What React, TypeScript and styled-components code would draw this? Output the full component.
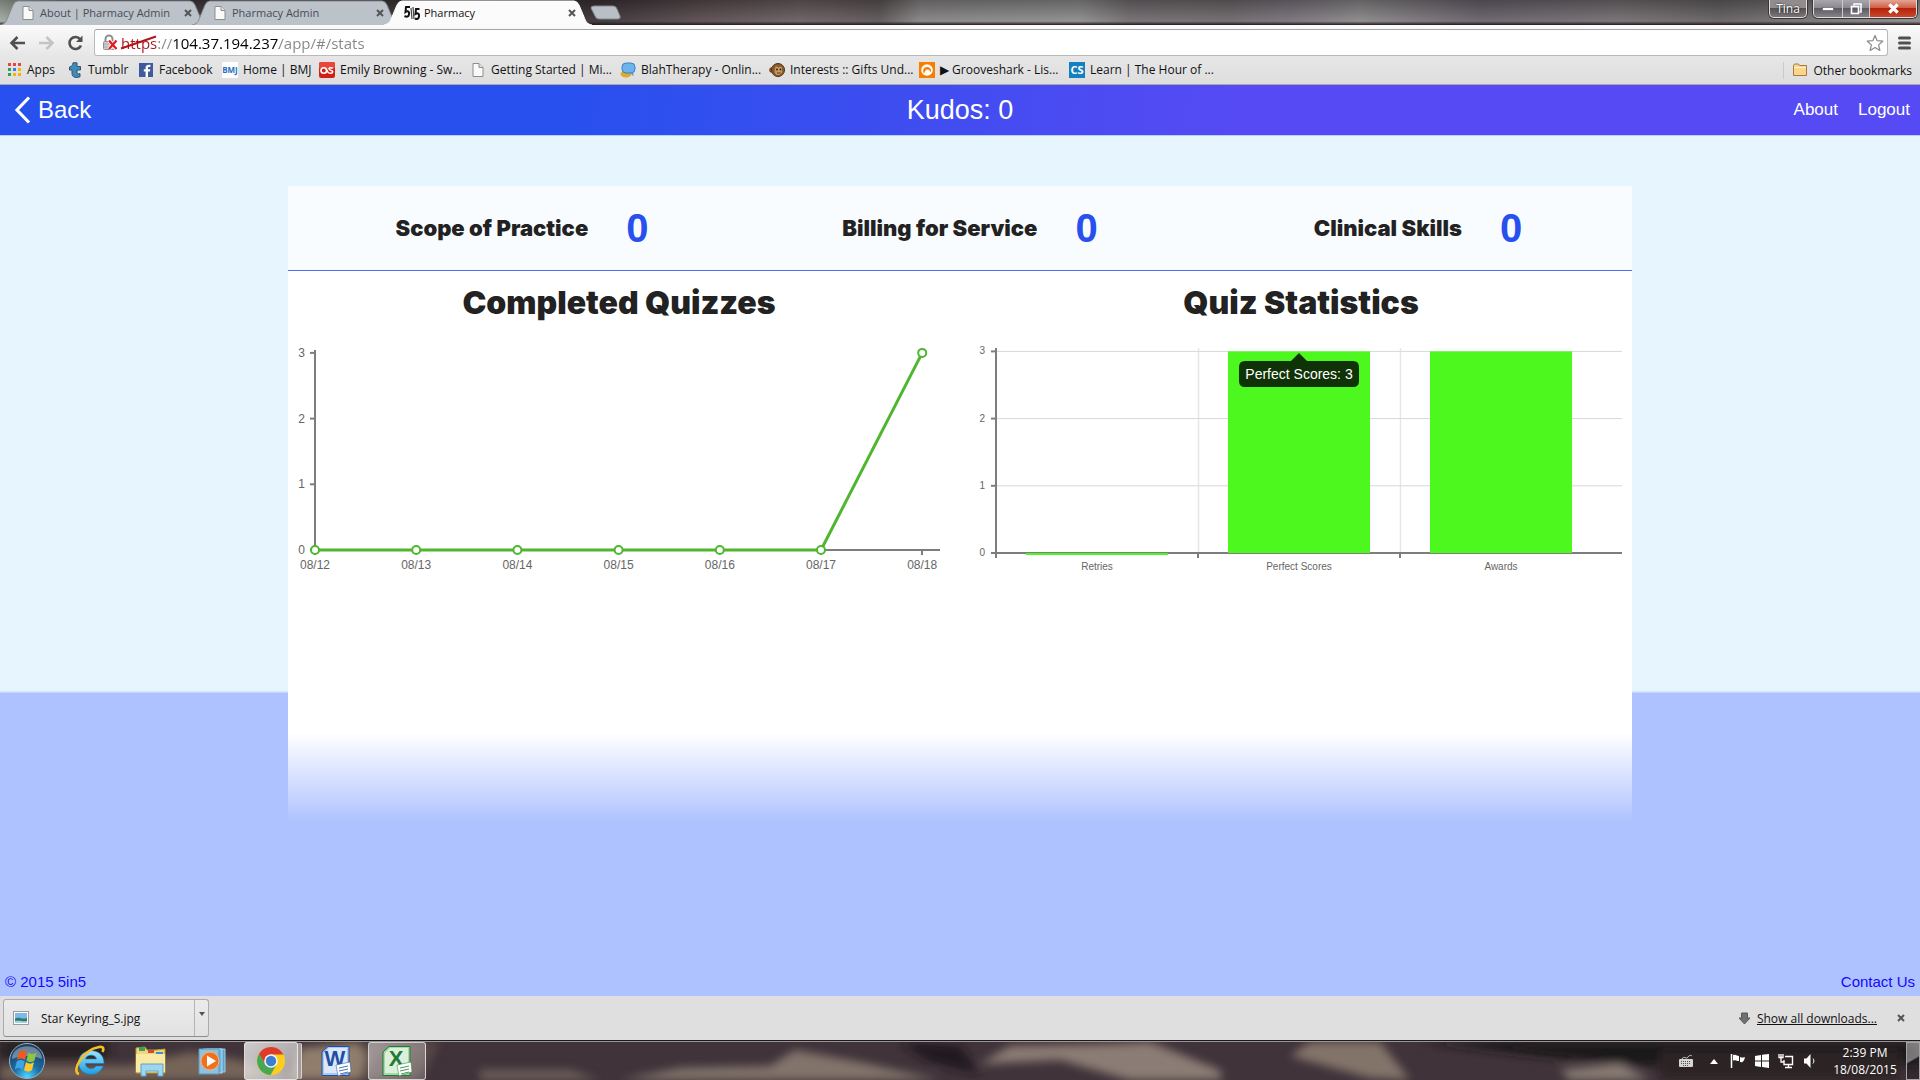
import React from "react";
import styled, { createGlobalStyle } from "styled-components";

const ui = `"Open Sans", "Noto Sans", sans-serif`;
const arial = `"Liberation Sans", Arial, sans-serif`;
const heavy = `Inter, "Liberation Sans", sans-serif`;

const Global = createGlobalStyle`
  *, *::before, *::after { box-sizing: border-box; }
  body { margin: 0; font-family: ${arial}; color: #222; }
  button { border: 0; padding: 0; background: none; font: inherit; color: inherit; cursor: pointer; }
  a { color: inherit; text-decoration: none; }
  h2, p { margin: 0; }
  svg { display: block; flex: none; }
`;

const Desktop = styled.div`
  min-height: 100vh;
  display: flex;
  flex-direction: column;
`;

/* ---------- window frame ---------- */

const TitleBar = styled.div`
  display: flex;
  height: 25px;
  padding-left: 8px;
  font: 12px ${ui};
  background:
    linear-gradient(180deg, rgba(0, 0, 0, 0.28), rgba(255, 255, 255, 0.06) 85%, rgba(40, 30, 35, 0.9) 98%),
    linear-gradient(90deg, #a3ada3 0, #8b9389 20px, #453b3d 60px, #3b3235 600px, #584b4e 700px, #6a5e60 800px,
      #5c5556 880px, #858383 920px, #8d8c8c 1080px, #716c6f 1130px, #6d686b 1230px, #77727a 1290px, #8a8789 1360px,
      #67616a 1480px, #736e71 1620px, #646062 1720px, #8c8b8c 100%);
`;

const Tabs = styled.nav`
  display: flex;
  flex: 1;
`;

const Tab = styled.div<{ $active?: boolean }>`
  position: relative;
  display: flex;
  align-items: center;
  gap: 4px;
  width: 192px;
  height: 25px;
  padding: 1px 8px 0 12px;
  color: ${(p) => (p.$active ? "#111" : "#484c52")};
  z-index: ${(p) => (p.$active ? 2 : 1)};
`;

const TabShape = styled.svg`
  position: absolute;
  left: -8px;
  top: 0;
  z-index: -1;
`;

const TabTitle = styled.button`
  flex: 1;
  min-width: 0;
  font-size: 11px;
  line-height: 16px;
  text-align: left;
  white-space: nowrap;
`;

const NewTab = styled.button`
  align-self: center;
  margin-left: 6px;
  z-index: 1;
`;

const UserBadge = styled.button`
  height: 18px;
  width: 38px;
  margin-right: 6px;
  border: 1px solid #ddd;
  border-top: 0;
  border-radius: 0 0 5px 5px;
  color: #fff;
  line-height: 16px;
  text-shadow: 0 0 2px #000;
  background: linear-gradient(#918d8e 45%, #565254 50%, #7b7778);
  box-shadow: 0 0 0 1px #3a3637;
`;

const WindowButtons = styled.div`
  display: flex;
  height: 18px;
  margin-right: 3px;
  border: 1px solid #ddd;
  border-top: 0;
  border-radius: 0 0 5px 5px;
  overflow: hidden;
  box-shadow: 0 0 0 1px #3a3637;
`;

const WindowButton = styled.button<{ $w: number; $close?: boolean }>`
  display: grid;
  place-items: center;
  width: ${(p) => p.$w}px;
  border-right: 1px solid #ccc;
  background: ${(p) =>
    p.$close
      ? "linear-gradient(#e3a595, #cf5f48 45%, #b52408 50%, #c8482c)"
      : "linear-gradient(#a9a7ac, #8b888f 45%, #5d5a62 50%, #85828a)"};
  &:last-child { border-right: 0; }
`;

/* ---------- toolbar ---------- */

const Chrome = styled.div`
  height: 60px;
  font: 12px ${ui};
  background: linear-gradient(#fbfbfb, #e6e6e6 32px, #dedede);
  border-bottom: 1px solid #a9a9a9;
`;

const AddressRow = styled.form`
  display: flex;
  align-items: center;
  height: 35px;
  padding: 0 9px;
`;

const NavButton = styled.button`
  width: 29px;
  height: 20px;
`;

const Omnibox = styled.label`
  position: relative;
  flex: 1;
  display: flex;
  align-items: center;
  gap: 3px;
  height: 27px;
  margin: 0 10px 0 -2px;
  padding: 0 3px 0 7px;
  background: #fff;
  border: 1px solid #b9b9b9;
  border-top-color: #a4a4a4;
  border-radius: 3px;
`;

const Address = styled.input`
  flex: 1;
  min-width: 0;
  height: 24px;
  padding: 0;
  border: 0;
  outline: 0;
  font: 15px ${ui};
  color: transparent;
  background: linear-gradient(90deg, #a8171d 37px, #858585 37px 51px, #000 51px 158px, #858585 158px);
  -webkit-background-clip: text;
  background-clip: text;
`;

const Strike = styled.svg`
  position: absolute;
  left: 25px;
  top: 5px;
`;

const Bookmarks = styled.nav`
  display: flex;
  align-items: center;
  height: 20px;
  padding: 0 8px 0 6px;
`;

const Bookmark = styled.a<{ $w: number }>`
  display: flex;
  align-items: center;
  gap: 5px;
  width: ${(p) => p.$w}px;
  line-height: 16px;
  white-space: nowrap;
  color: #111;
`;

const OtherBookmarks = styled.a`
  display: flex;
  align-items: center;
  gap: 5px;
  margin-left: auto;
  padding-left: 8px;
  border-left: 1px solid #c4ccd3;
  color: #111;
`;

/* ---------- web page ---------- */

const Page = styled.div`
  flex: 1;
  display: flex;
  flex-direction: column;
  background: linear-gradient(#e7f5ff 66.5%, #aec2ff 66.8%);
`;

const Header = styled.header`
  display: grid;
  grid-template-columns: 1fr auto 1fr;
  align-items: center;
  height: 50px;
  padding: 0 10px;
  color: #fff;
  background: linear-gradient(96deg, #2850ee 30%, #554af3 64%);
  box-shadow: 0 1px 0 #afd3ff;
`;

const Back = styled.a`
  display: flex;
  align-items: center;
  gap: 7px;
  padding-left: 4px;
  font-size: 24px;
`;

const Kudos = styled.div`
  font-size: 27px;
`;

const HeaderLinks = styled.nav`
  display: flex;
  justify-content: flex-end;
  gap: 20px;
  font-size: 17px;
`;

const Card = styled.main`
  width: 70%;
  margin: 51px auto 0;
`;

const Scores = styled.section`
  display: grid;
  grid-template-columns: repeat(3, 1fr);
  height: 85px;
  background: #f9fcff;
  border-bottom: 1px solid #4a70ee;
`;

const Score = styled.div`
  display: flex;
  align-items: center;
  justify-content: center;
  gap: 38px;
  padding-left: 20px;
  white-space: nowrap;
`;

const ScoreLabel = styled.span`
  font: 900 22px ${heavy};
`;

const ScoreValue = styled.span`
  font: bold 40px ${arial};
  color: #2850ee;
`;

const Charts = styled.section`
  display: grid;
  grid-template-columns: 1fr 1fr;
  gap: 20px;
  padding: 12px 0 153px;
  background: #fff;
`;

const ChartTitle = styled.h2`
  margin-bottom: 12px;
  font: 900 32px/40px ${heavy};
  text-align: center;
`;

const Plot = styled.svg`
  width: 100%;
  height: auto;
  font-family: ${arial};
  fill: #666;
`;

const Fade = styled.div`
  height: 89px;
  background: linear-gradient(#fff, #aec2ff);
`;

const Footer = styled.footer`
  display: flex;
  justify-content: space-between;
  margin-top: auto;
  padding: 0 5px 4px;
  font-size: 15px;
  line-height: 20px;
  color: #1607ff;
`;

/* ---------- downloads ---------- */

const Downloads = styled.div`
  display: flex;
  align-items: center;
  height: 44px;
  padding: 0 15px 0 3px;
  font: 12px ${ui};
  color: #111;
  background: #dfdfdf;
`;

const Download = styled.div`
  display: flex;
  width: 206px;
  height: 38px;
  border: 1px solid #acacac;
  border-bottom-color: #8d8d8d;
  border-radius: 3px;
  background: linear-gradient(#ebebeb, #e2e2e2);
`;

const FileButton = styled.button`
  flex: 1;
  display: flex;
  align-items: center;
  gap: 12px;
  padding-left: 9px;
  border-right: 1px solid #b4b4b4;
`;

const FileMenu = styled.button`
  display: grid;
  justify-content: center;
  width: 13px;
  padding-top: 12px;
`;

const ShowAll = styled.a`
  display: flex;
  align-items: center;
  gap: 6px;
  margin: 0 20px 0 auto;
  text-decoration: underline;
`;

/* ---------- taskbar ---------- */

const Taskbar = styled.footer`
  position: relative;
  display: flex;
  align-items: center;
  height: 40px;
  padding-left: 8px;
  overflow: hidden;
  border-top: 1px solid #1c1a1c;
  background: #40333a;
  box-shadow: inset 0 1px 0 #9b9696;
  isolation: isolate;
`;

const Wallpaper = styled.svg`
  position: absolute;
  inset: 1px 0 0;
  width: 100%;
  height: 38px;
  z-index: -1;
`;

const TaskButton = styled.button<{ $open?: boolean }>`
  display: grid;
  place-items: center;
  width: 58px;
  height: 38px;
  margin-right: 3px;
  border: 1px solid ${(p) => (p.$open ? "rgba(240,236,236,.75)" : "transparent")};
  border-radius: 3px;
  background: ${(p) => (p.$open ? "linear-gradient(135deg, rgba(255,255,255,.45), rgba(255,255,255,.18))" : "none")};
`;

const StackedButton = styled(TaskButton)`
  width: 54px;
  background: linear-gradient(135deg, rgba(255, 255, 255, 0.75), rgba(255, 255, 255, 0.5));
  box-shadow: 4px 0 0 -1px rgba(160, 150, 150, 0.9), 5px 0 0 -1px #d8d4d4;
  margin-right: 9px;
`;

const StartButton = styled.button`
  width: 38px;
  margin-right: 15px;
`;

const Tray = styled.div`
  display: flex;
  align-items: center;
  gap: 8px;
  margin-left: auto;
  height: 38px;
`;

const Clock = styled.time`
  width: 66px;
  margin-left: 6px;
  font: 12px/17px ${ui};
  color: #fff;
  text-align: center;
  white-space: nowrap;
`;

const ShowDesktop = styled.button`
  width: 14px;
  height: 38px;
  border: 1px solid #a8a4a6;
  background: linear-gradient(150deg, rgba(255, 255, 255, 0.4) 45%, rgba(0, 0, 0, 0.2) 50%);
`;

/* ---------- icons ---------- */

const DocIcon = () => (
  <svg width="16" height="16" viewBox="0 0 16 16">
    <path d="M3 1.5h6l4 4v9H3z" fill="#fafafa" stroke="#8d8d8d" />
    <path d="M9 1.5v4h4" fill="#e2e2e2" stroke="#8d8d8d" />
  </svg>
);

const FiveIcon = () => (
  <svg width="16" height="16" viewBox="0 0 16 16" fill="none" stroke="#111" strokeWidth="2">
    <path d="M6 2H2L1.500 7C4 5 5.500 7 5 9.500 4.500 12 2.500 12 .5 11" />
    <path d="M7 3l1 11M9 2l1 12" stroke="#444" strokeWidth="1.200" />
    <path d="M15.500 4h-3.500l-.5 5c2.500-1.500 4 0 3.500 2.500-.5 2.500-2 3-4 2" />
  </svg>
);

const Cross = ({ size = 8, color = "#555", w = 2 }: { size?: number; color?: string; w?: number }) => (
  <svg width={size} height={size} viewBox="0 0 8 8">
    <path d="M1 1l6 6M7 1L1 7" stroke={color} strokeWidth={w} />
  </svg>
);

const ArrowIcon = ({ color, flip }: { color: string; flip?: boolean }) => (
  <svg width="17" height="20" viewBox="0 0 17 20">
    <path d={flip ? "M1 10h13M8.500 4l6 6-6 6" : "M16 10H3M8.500 4l-6 6 6 6"} fill="none" stroke={color} strokeWidth="2.600" />
  </svg>
);

const ReloadIcon = () => (
  <svg width="17" height="20" viewBox="0 0 17 20">
    <path d="M13.200 6.200A6 6 0 1 0 14 12.500" fill="none" stroke="#505050" strokeWidth="2.600" />
    <path d="M15.500 2.500V9H9z" fill="#505050" />
  </svg>
);

const LockIcon = () => (
  <svg width="16" height="18" viewBox="0 0 16 18">
    <path d="M3.500 8V5a3.500 3.500 0 0 1 7 0v3" fill="none" stroke="#8f8f8f" strokeWidth="2" />
    <rect x="1.500" y="7.500" width="11" height="8" rx="1" fill="#cdcdcd" stroke="#909090" />
    <path d="M2 10h9M2 13h9" stroke="#aaa" />
    <path d="M7 6.500l7.500 8.500M14.500 6.500L7 15" stroke="#fff" strokeWidth="4" />
    <path d="M7 6.500l7.500 8.500M14.500 6.500L7 15" stroke="#e3191b" strokeWidth="2.200" />
  </svg>
);

const StarIcon = () => (
  <svg width="18" height="18" viewBox="0 0 18 18">
    <path d="M9 1.500l2.200 5.200 5.600.5-4.200 3.700 1.300 5.600L9 13.500l-4.900 3 1.300-5.600L1.200 7.200l5.600-.5z" fill="#fff" stroke="#8b8b8b" strokeWidth="1.200" strokeLinejoin="round" />
  </svg>
);

const MenuIcon = () => (
  <svg width="13" height="14" viewBox="0 0 13 14">
    <path d="M1.500 2h10M1.500 7h10M1.500 12h10" stroke="#505050" strokeWidth="3" strokeLinecap="round" />
  </svg>
);

const AppsIcon = () => (
  <svg width="16" height="16" viewBox="0 0 16 16">
    {["#e8453c", "#e8453c", "#e8453c", "#2fa14f", "#3b7ded", "#f4b400", "#2fa14f", "#f4b400", "#f4b400"].map((c, i) => (
      <rect key={i} x={2 + (i % 3) * 5} y={1 + Math.floor(i / 3) * 5} width="3" height="3" fill={c} />
    ))}
  </svg>
);

const TumblrIcon = () => (
  <svg width="16" height="16" viewBox="0 0 16 16">
    <path d="M6 .8h4v3.700h3.500V8H10v3c0 1 1.500 1.200 3 .6v3.200c-4 1.500-8 .6-8-3.300V8H2.500V5C5 4.500 5.800 3 6 .8z" fill="#3e8cba" stroke="#34526b" />
  </svg>
);

const FacebookIcon = () => (
  <svg width="16" height="16" viewBox="0 0 16 16">
    <rect x="1" y="1" width="14" height="14" fill="#3f5b9b" />
    <path d="M10 15V9.500h2l.3-2.300H10V6c0-.8.3-1.100 1.200-1.100h1.200V2.800C9.200 2.400 7.600 3.300 7.600 5.600v1.600H5.800v2.300h1.800V15z" fill="#fff" />
  </svg>
);

const LetterIcon = ({ text, bg, color = "#fff", size, y = 11 }: { text: string; bg: string; color?: string; size: number; y?: number }) => (
  <svg width="16" height="16" viewBox="0 0 16 16">
    <rect width="16" height="16" fill={bg} />
    <text x="8" y={y} fontSize={size} fontFamily="Open Sans" fontWeight="bold" fill={color} textAnchor="middle">{text}</text>
  </svg>
);

const LastIcon = () => (
  <svg width="16" height="16" viewBox="0 0 16 16">
    <rect width="16" height="16" rx="2" fill="#cf1f16" />
    <rect width="16" height="7" rx="2" fill="#e6493a" />
    <circle cx="4.800" cy="8.500" r="2.800" fill="none" stroke="#fff" strokeWidth="1.600" />
    <path d="M14 6.200c-2-1-4.200-.6-4 .8s3.800 1 3.800 2.800-3 2-4.800.4L7 7" fill="none" stroke="#fff" strokeWidth="1.500" />
  </svg>
);

const ChatIcon = () => (
  <svg width="16" height="16" viewBox="0 0 16 16">
    <ellipse cx="6" cy="12" rx="5.500" ry="3.500" fill="#e0a92c" />
    <rect x="2" y="1" width="13" height="10" rx="4" fill="#6eb4ec" stroke="#3d82c4" />
    <path d="M10 10l3.500 4.500-.5-5z" fill="#4d91cf" />
  </svg>
);

const MonkeyIcon = () => (
  <svg width="16" height="16" viewBox="0 0 16 16">
    <circle cx="3" cy="8" r="2.800" fill="#7d4f26" />
    <circle cx="9" cy="8" r="6.500" fill="#8a5a2c" stroke="#4f3014" />
    <path d="M6 7c0-3 3-3 3.500-1C10 4 14 4 13 8c1 3-2 5-4 5s-4-2-3-6z" fill="#c69a66" />
    <circle cx="8" cy="7.500" r=".9" fill="#2b190a" />
    <circle cx="11.500" cy="7.500" r=".9" fill="#2b190a" />
    <path d="M8 11h3.500" stroke="#5a3515" />
  </svg>
);

const GroovesharkIcon = () => (
  <svg width="16" height="16" viewBox="0 0 16 16">
    <rect width="16" height="16" fill="#f77f00" />
    <circle cx="8" cy="8" r="5.800" fill="#fff" />
    <path d="M5 11.500C3 8 5 5 8 5s4.500 2.500 4 5c-1-.5-1.500-2.500-3.500-2.500S6 9.500 5 11.500z" fill="#f77f00" />
  </svg>
);

const FolderIcon = () => (
  <svg width="16" height="16" viewBox="0 0 16 16">
    <path d="M1.500 13.500v-10l1-1.500h4l1 1.500h7v10z" fill="#fbd58c" stroke="#a77a3e" />
    <path d="M2 5.500h12" stroke="#fff1cf" />
  </svg>
);

const ImageFileIcon = () => (
  <svg width="16" height="14" viewBox="0 0 16 14">
    <rect x=".5" y=".5" width="15" height="13" fill="#fff" stroke="#9b9b9b" />
    <rect x="2" y="2" width="12" height="10" fill="#7fb9e6" />
    <path d="M2 8c4-3 7 1 12-1v5H2z" fill="#2d7a6b" />
    <path d="M2 10c5-1 8 1 12 0v2H2z" fill="#9fd6e5" />
  </svg>
);

const StartOrb = () => (
  <svg width="38" height="38" viewBox="0 0 38 38">
    <defs>
      <radialGradient id="orb" cx="50%" cy="95%" r="85%">
        <stop offset="0" stopColor="#4fd6ff" />
        <stop offset=".45" stopColor="#1b6ea6" />
        <stop offset="1" stopColor="#1d3d5c" />
      </radialGradient>
    </defs>
    <circle cx="19" cy="19" r="17.500" fill="url(#orb)" stroke="#8fb4cc" />
    <path d="M4 17C4 0 34 0 34 17 25 13 13 13 4 17z" fill="#fff" opacity=".35" />
    <path d="M11 10c3-2 5-2 8 0l-2 8c-3-2-5-2-8 0z" fill="#ee5a24" />
    <path d="M20.500 10.500c3 2 5 2 8 0l-2 8c-3 2-5 2-8 0z" fill="#8fc640" />
    <path d="M8.700 19.500c3-2 5-2 8 0l-2 8c-3-2-5-2-8 0z" fill="#3fa4e6" />
    <path d="M18 20c3 2 5 2 8 0l-2 8c-3 2-5 2-8 0z" fill="#fdc92c" />
  </svg>
);

const ExplorerE = () => (
  <svg width="32" height="32" viewBox="0 0 32 32">
    <defs>
      <linearGradient id="ie" x2="0" y2="1">
        <stop offset="0" stopColor="#9be4fb" />
        <stop offset="1" stopColor="#1f9be0" />
      </linearGradient>
    </defs>
    <path d="M30 18.500H11.500c.3 6 8.500 6.500 10.500 2.500h7.300C24 34.500 4.500 31 4.500 17.500 4.500 2 30.500 1 30 18.500zM11.500 14h11c-.7-5-10-5-11 0z" fill="url(#ie)" stroke="#1578b8" strokeWidth=".6" />
    <path d="M5 29C-3 27 8 5 25 2c5-.8 5 2 3.500 5" fill="none" stroke="#f5bf26" strokeWidth="2.600" />
  </svg>
);

const LibraryIcon = () => (
  <svg width="34" height="32" viewBox="0 0 34 32">
    <path d="M2 3l9-1 2 3h9l9-1v24H2z" fill="#f0d77d" stroke="#b9983c" />
    <path d="M5 2h6v4H5z" fill="#3f9e54" />
    <path d="M14 5h6v3h-6z" fill="#d34c32" />
    <path d="M22 7h7v2h-7z" fill="#3d8fd1" />
    <path d="M2 9h29v18H2z" fill="#f8e9a4" />
    <path d="M7 31V19h22v12h-5v-5H12v5z" fill="#9ed5ef" stroke="#5aa3cb" />
  </svg>
);

const MediaIcon = () => (
  <svg width="28" height="28" viewBox="0 0 28 28">
    <path d="M8 2h19v23H8z" fill="#5ba1cf" stroke="#9ccbe8" />
    <path d="M5 2h19v24H5z" fill="#73b4da" stroke="#b5d9ee" />
    <path d="M1 2h20v25H1z" fill="#8cc3e2" stroke="#6197b9" />
    <circle cx="12" cy="14" r="9" fill="#f0701c" stroke="#fbb183" />
    <path d="M9 8.500v11l9-5.500z" fill="#fff" />
  </svg>
);

const ChromeIcon = () => (
  <svg width="30" height="30" viewBox="0 0 30 30">
    <circle cx="15" cy="15" r="14" fill="#fccd1d" />
    <path d="M15 8.500h12.500A14 14 0 0 0 2.900 8L9 18z" fill="#de3b2d" />
    <path d="M2.900 8A14 14 0 0 0 14.500 29L20.500 18.500 15 15 9.500 18.500z" fill="#47a851" />
    <circle cx="15" cy="15" r="6.800" fill="#f3f3f3" />
    <circle cx="15" cy="15" r="5.200" fill="#3a7fd0" />
  </svg>
);

const OfficeIcon = ({ letter, color, tint }: { letter: string; color: string; tint: string }) => (
  <svg width="32" height="32" viewBox="0 0 32 32">
    <path d="M8 1.500h21v29H2V7z" fill={tint} stroke={color} />
    <path d="M4 8l5-5h18v25H4z" fill="#fff" opacity=".6" />
    <text x="15" y="21" fontFamily="Liberation Sans" fontWeight="bold" fontSize="22" fill={color} textAnchor="middle">{letter}</text>
    <path d="M16 20l14-3 1 10-13 4z" fill="#fff" stroke={color} strokeWidth=".5" />
    <path d="M19 23l9-2M19 26l9-2M20 29l8-2" stroke={color} strokeWidth=".8" />
  </svg>
);

const KeyboardIcon = () => (
  <svg width="20" height="16" viewBox="0 0 20 16">
    <path d="M4 6c2-4 4 1 6-2s4-1 4-1" fill="none" stroke="#cfcfcf" />
    <rect x="1" y="6" width="14" height="8" rx="1" fill="#d5d5d5" />
    <path d="M3 8.500h10M3 10.500h10M5 12.500h6" stroke="#555" strokeDasharray="1 1" />
  </svg>
);

const FlagIcon = () => (
  <svg width="16" height="16" viewBox="0 0 16 16">
    <path d="M1.500 1v14" stroke="#fff" strokeWidth="1.500" />
    <path d="M3 2c3-1 4 1 6 1v5C7 8 6 6.500 3 7.500zM10 4c2 1 3 .5 5 0-.5 2-1 4-2.500 5-1 .5-1.500 0-2.500 0z" fill="#fff" />
  </svg>
);

const WindowsIcon = () => (
  <svg width="16" height="16" viewBox="0 0 16 16">
    <path d="M1 3l6-1v5.500H1zM8 1.800L15 1v6.500H8zM1 8.500h6V14l-6-1zM8 8.500h7V15l-7-.9z" fill="#fff" />
  </svg>
);

const NetworkIcon = () => (
  <svg width="16" height="16" viewBox="0 0 16 16" fill="none" stroke="#fff">
    <path d="M7 3.500h7.500v8H6V7" strokeWidth="1.400" />
    <path d="M1 1v3.500h4V1M3 4.500V9h3M3 1v3M7 14.500h7M10.500 12v2" strokeWidth="1.300" />
  </svg>
);

const SpeakerIcon = () => (
  <svg width="16" height="16" viewBox="0 0 16 16">
    <path d="M2 5.500h2.500L8.500 1v14l-4-4.500H2z" fill="#fff" />
    <path d="M11 5.500c1.200 1.500 1.200 3.500 0 5" fill="none" stroke="#fff" />
  </svg>
);

/* ---------- data ---------- */

const bookmarks: { label: string; icon: React.ReactNode; w: number }[] = [
  { label: "Apps", icon: <AppsIcon />, w: 61 },
  { label: "Tumblr", icon: <TumblrIcon />, w: 71 },
  { label: "Facebook", icon: <FacebookIcon />, w: 84 },
  { label: "Home | BMJ", icon: <LetterIcon text="BMJ" bg="#fff" color="#2a6ebb" size={8} />, w: 97 },
  { label: "Emily Browning - Sw...", icon: <LastIcon />, w: 151 },
  { label: "Getting Started | Mi...", icon: <DocIcon />, w: 150 },
  { label: "BlahTherapy - Onlin...", icon: <ChatIcon />, w: 149 },
  { label: "Interests :: Gifts Und...", icon: <MonkeyIcon />, w: 150 },
  { label: "▶ Grooveshark - Lis...", icon: <GroovesharkIcon />, w: 150 },
  { label: "Learn | The Hour of ...", icon: <LetterIcon text="CS" bg="#1580c0" size={11} y={12} />, w: 150 },
];

const scores = ["Scope of Practice", "Billing for Service", "Clinical Skills"];
const days = ["08/12", "08/13", "08/14", "08/15", "08/16", "08/17", "08/18"];
const completed = [0, 0, 0, 0, 0, 0, 3];
const stats = [
  { label: "Retries", value: 0 },
  { label: "Perfect Scores", value: 3 },
  { label: "Awards", value: 3 },
];

const BrowserTab = ({ title, icon, active }: { title: string; icon: React.ReactNode; active?: boolean }) => (
  <Tab $active={active}>
    <TabShape width="212" height="25" viewBox="0 0 212 25">
      <path
        d="M0 25C5 24 6 22 8 17L13 5Q15 1 18 1H190Q193 1 195 5L200 17C202 22 203 24 208 25"
        fill={active ? "#fbfbfb" : "#bcc2ca"}
        stroke={active ? "#fff" : "#868a90"}
      />
    </TabShape>
    {icon}
    <TabTitle type="button">{title}</TabTitle>
    <button type="button" aria-label="Close tab"><Cross /></button>
  </Tab>
);

const LineChart = () => {
  const x = (i: number) => 27 + i * 101.2;
  const y = (v: number) => 215 - v * 65.7;
  return (
    <Plot viewBox="0 0 662 245" fontSize="12" role="img" aria-label="Completed Quizzes">
      <path d="M27 15V220M22 215H652M634 215v5" stroke="#7d7d7d" strokeWidth="2" fill="none" />
      {[0, 1, 2, 3].map((v) => (
        <g key={v}>
          <path d={`M22 ${y(v)}h5`} stroke="#7d7d7d" strokeWidth="2" />
          <text x="17" y={y(v) + 4} textAnchor="end">{v}</text>
        </g>
      ))}
      <polyline points={completed.map((v, i) => `${x(i)},${y(v)}`).join(" ")} fill="none" stroke="#4fb62f" strokeWidth="3" strokeLinejoin="round" />
      {completed.map((v, i) => (
        <g key={i}>
          <circle cx={x(i)} cy={y(v)} r="4" fill="#fff" stroke="#4fb62f" strokeWidth="2" />
          <text x={x(i)} y="234" textAnchor="middle">{days[i]}</text>
        </g>
      ))}
    </Plot>
  );
};

const BarChart = () => {
  const y = (v: number) => 218 - v * 67.2;
  return (
    <Plot viewBox="0 0 662 245" fontSize="10" role="img" aria-label="Quiz Statistics">
      <path d="M228.500 13V218M430.500 13V218" stroke="#e6e6e6" strokeWidth="1.500" />
      {[0, 1, 2, 3].map((v) => (
        <g key={v}>
          <path d={`M26 ${y(v)}H652`} stroke="#d8d8d8" strokeWidth="1" />
          <path d={`M21 ${y(v)}h5`} stroke="#7d7d7d" strokeWidth="2" />
          <text x="15" y={y(v) + 3} textAnchor="end">{v}</text>
        </g>
      ))}
      <path d="M26 13V223M26 218H652M228 218v5M430 218v5" stroke="#7d7d7d" strokeWidth="2" />
      {stats.map((s, i) => (
        <g key={s.label}>
          <rect x={56 + i * 202} y={s.value ? y(s.value) : 218} width="142" height={s.value ? 218 - y(s.value) : 2} fill="#4cf81e" />
          <text x={127 + i * 202} y="235" textAnchor="middle">{s.label}</text>
        </g>
      ))}
      <path d="M329 18l8 8h46q6 0 6 6v14q0 6-6 6H275q-6 0-6-6V32q0-6 6-6h46z" fill="#000" fillOpacity=".8" />
      <text x="329" y="44" fontSize="14" fill="#fff" textAnchor="middle">Perfect Scores: 3</text>
    </Plot>
  );
};

export default function App() {
  return (
    <Desktop>
      <Global />
      <TitleBar>
        <Tabs>
          <BrowserTab title="About | Pharmacy Admin" icon={<DocIcon />} />
          <BrowserTab title="Pharmacy Admin" icon={<DocIcon />} />
          <BrowserTab title="Pharmacy" icon={<FiveIcon />} active />
          <NewTab aria-label="New tab">
            <svg width="32" height="15" viewBox="0 0 32 15">
              <path d="M1 3Q1 1 4 1H23Q26 1 27 4L30 11Q31 14 28 14H9Q6 14 5 11Z" fill="#b9bfc6" stroke="#83868b" />
            </svg>
          </NewTab>
        </Tabs>
        <UserBadge>Tina</UserBadge>
        <WindowButtons>
          <WindowButton $w={29} aria-label="Minimize">
            <svg width="12" height="6"><rect x=".5" y="1.500" width="11" height="3" fill="#fff" stroke="#555" strokeWidth=".6" /></svg>
          </WindowButton>
          <WindowButton $w={27} aria-label="Restore">
            <svg width="12" height="12" viewBox="0 0 12 12" fill="none" stroke="#fff" strokeWidth="1.600">
              <path d="M4 2.500V1h7v8H9.500" />
              <rect x="1.500" y="3.500" width="7" height="7" />
            </svg>
          </WindowButton>
          <WindowButton $w={46} $close aria-label="Close"><Cross size={11} color="#fff" w={2.4} /></WindowButton>
        </WindowButtons>
      </TitleBar>

      <Chrome>
        <AddressRow onSubmit={(e) => e.preventDefault()}>
          <NavButton type="button" aria-label="Back"><ArrowIcon color="#505050" /></NavButton>
          <NavButton type="button" aria-label="Forward"><ArrowIcon color="#c4c4c4" flip /></NavButton>
          <NavButton type="button" aria-label="Reload"><ReloadIcon /></NavButton>
          <Omnibox>
            <LockIcon />
            <Address aria-label="Address" defaultValue="https://104.37.194.237/app/#/stats" />
            <Strike width="38" height="16" viewBox="0 0 38 16">
              <path d="M1 13.500L36 1.500" stroke="#b0151b" strokeWidth="2" />
            </Strike>
            <StarIcon />
          </Omnibox>
          <button type="button" aria-label="Menu"><MenuIcon /></button>
        </AddressRow>
        <Bookmarks>
          {bookmarks.map((b) => (
            <Bookmark key={b.label} href="#" $w={b.w}>{b.icon}{b.label}</Bookmark>
          ))}
          <OtherBookmarks href="#"><FolderIcon />Other bookmarks</OtherBookmarks>
        </Bookmarks>
      </Chrome>

      <Page>
        <Header>
          <Back href="#">
            <svg width="17" height="28" viewBox="0 0 17 28">
              <path d="M15 1.500L3 14l12 12.500" fill="none" stroke="#fff" strokeWidth="3.200" />
            </svg>
            Back
          </Back>
          <Kudos>Kudos: 0</Kudos>
          <HeaderLinks>
            <a href="#">About</a>
            <a href="#">Logout</a>
          </HeaderLinks>
        </Header>
        <Card>
          <Scores>
            {scores.map((s) => (
              <Score key={s}>
                <ScoreLabel>{s}</ScoreLabel>
                <ScoreValue>0</ScoreValue>
              </Score>
            ))}
          </Scores>
          <Charts>
            <div>
              <ChartTitle>Completed Quizzes</ChartTitle>
              <LineChart />
            </div>
            <div>
              <ChartTitle>Quiz Statistics</ChartTitle>
              <BarChart />
            </div>
          </Charts>
          <Fade />
        </Card>
        <Footer>
          <p>© 2015 5in5</p>
          <a href="#">Contact Us</a>
        </Footer>
      </Page>

      <Downloads>
        <Download>
          <FileButton><ImageFileIcon />Star Keyring_S.jpg</FileButton>
          <FileMenu aria-label="Download options">
            <svg width="6" height="4" viewBox="0 0 6 4"><path d="M0 0h6L3 4z" fill="#555" /></svg>
          </FileMenu>
        </Download>
        <ShowAll href="#">
          <svg width="13" height="13" viewBox="0 0 13 13"><path d="M3.500 1h6v5H12l-5.500 6L1 6h2.500z" fill="#707070" stroke="#585858" /></svg>
          Show all downloads...
        </ShowAll>
        <button aria-label="Close downloads"><Cross /></button>
      </Downloads>

      <Taskbar>
        <Wallpaper viewBox="0 0 1920 38" preserveAspectRatio="none">
          <defs>
            <filter id="soft" x="-5%" y="-40%" width="110%" height="180%"><feGaussianBlur stdDeviation="5" /></filter>
          </defs>
          <g filter="url(#soft)" opacity=".9">
            <path d="M0 0H110V16H0z" fill="#241c1c" />
            <path d="M0 24H130L190 10 240 18 300 38H0z" fill="#7b6a5b" />
            <path d="M300 6L360 0 380 38H290z" fill="#9a8672" />
            <path d="M370 0H440L420 38H360z" fill="#5c4c4a" />
            <path d="M480 28H570L600 38H480z" fill="#75665d" />
            <path d="M620 38L680 26 770 24 795 8 860 20 940 38H620z" fill="#8a7b71" />
            <path d="M900 0L960 4 980 32 930 20z" fill="#1f191d" />
            <path d="M980 22L1010 4 1110 2 1150 0 1220 28 1222 38H1130L1060 18z" fill="#94857b" />
            <path d="M1290 14L1310 0H1380L1410 38 1370 36z" fill="#8b7c6f" />
            <path d="M1420 0H1920V22L1640 24 1540 14z" fill="#191717" />
            <path d="M1560 28L1620 22 1650 38H1570z" fill="#93867d" />
            <path d="M1660 8H1900V38H1660z" fill="#2c2223" />
          </g>
        </Wallpaper>
        <StartButton aria-label="Start"><StartOrb /></StartButton>
        <TaskButton aria-label="Internet Explorer"><ExplorerE /></TaskButton>
        <TaskButton aria-label="Windows Explorer"><LibraryIcon /></TaskButton>
        <TaskButton aria-label="Media Player"><MediaIcon /></TaskButton>
        <StackedButton $open aria-label="Google Chrome"><ChromeIcon /></StackedButton>
        <TaskButton aria-label="Word"><OfficeIcon letter="W" color="#1d4fa3" tint="#a9c6ec" /></TaskButton>
        <TaskButton $open aria-label="Excel"><OfficeIcon letter="X" color="#1e7a35" tint="#a6d8a4" /></TaskButton>
        <Tray>
          <KeyboardIcon />
          <svg width="16" height="16" viewBox="0 0 16 16"><path d="M4 11l4-5 4 5z" fill="#fff" /></svg>
          <FlagIcon />
          <WindowsIcon />
          <NetworkIcon />
          <SpeakerIcon />
          <Clock>2:39 PM<br />18/08/2015</Clock>
          <ShowDesktop aria-label="Show desktop" />
        </Tray>
      </Taskbar>
    </Desktop>
  );
}
